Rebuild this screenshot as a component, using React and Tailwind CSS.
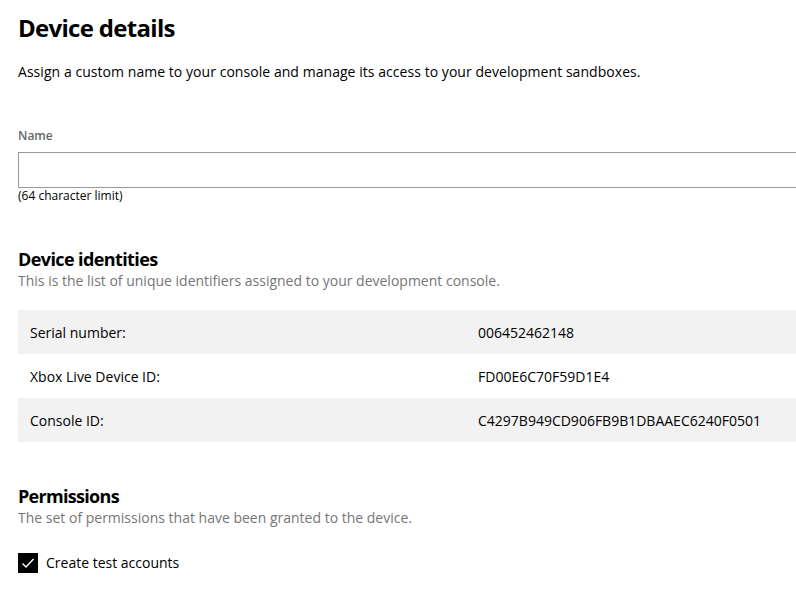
export default function App() {
  const rows = [
    { label: "Serial number:", value: "006452462148" },
    { label: "Xbox Live Device ID:", value: "FD00E6C70F59D1E4" },
    { label: "Console ID:", value: "C4297B949CD906FB9B1DBAAEC6240F0501" },
  ];

  return (
    <div className="w-[796px] h-[594px] overflow-hidden bg-white text-black font-['Open_Sans',sans-serif]">
      <div className="w-[938px] pl-[18px] pt-3">
        {/* Header */}
        <h1 className="text-[24px] leading-[32px] font-bold tracking-[-0.7px]">Device details</h1>
        <p className="mt-[18px] text-[14px] leading-[20px] tracking-[0.05px]">
          Assign a custom name to your console and manage its access to your development sandboxes.
        </p>

        {/* Name field */}
        <label className="block mt-[46px] text-[12px] leading-[16px] font-semibold text-[#666]">
          Name
        </label>
        <input
          type="text"
          className="block mt-2 w-[920px] h-9 border border-[#999] px-2 text-[14px] outline-none"
        />
        <p className="text-[12px] leading-[16px]">(64 character limit)</p>

        {/* Device identities */}
        <h2 className="mt-[44px] text-[18px] leading-[23px] font-bold tracking-[-0.6px]">Device identities</h2>
        <p className="text-[14px] leading-[20px] text-[#767676]">
          This is the list of unique identifiers assigned to your development console.
        </p>

        <div className="mt-[19px] w-[920px]">
          {rows.map((r, i) => (
            <div
              key={r.label}
              className={`grid grid-cols-2 h-11 items-center text-[14px] ${
                i % 2 === 0 ? "bg-[#f2f2f2]" : "bg-white"
              }`}
            >
              <span className="pl-3">{r.label}</span>
              <span>{r.value}</span>
            </div>
          ))}
        </div>

        {/* Permissions */}
        <h2 className="mt-[43px] text-[18px] leading-[23px] font-bold tracking-[-0.7px]">Permissions</h2>
        <p className="text-[14px] leading-[20px] text-[#767676]">
          The set of permissions that have been granted to the device.
        </p>

        <label className="mt-6 flex items-center gap-2 text-[14px]">
          <span className="w-5 h-5 bg-black flex items-center justify-center">
            <svg width="14" height="14" viewBox="0 0 14 14" fill="none">
              <path d="M1.5 7.5 L5 11 L12.5 3" stroke="white" strokeWidth="1.4" />
            </svg>
          </span>
          Create test accounts
        </label>
      </div>
    </div>
  );
}
